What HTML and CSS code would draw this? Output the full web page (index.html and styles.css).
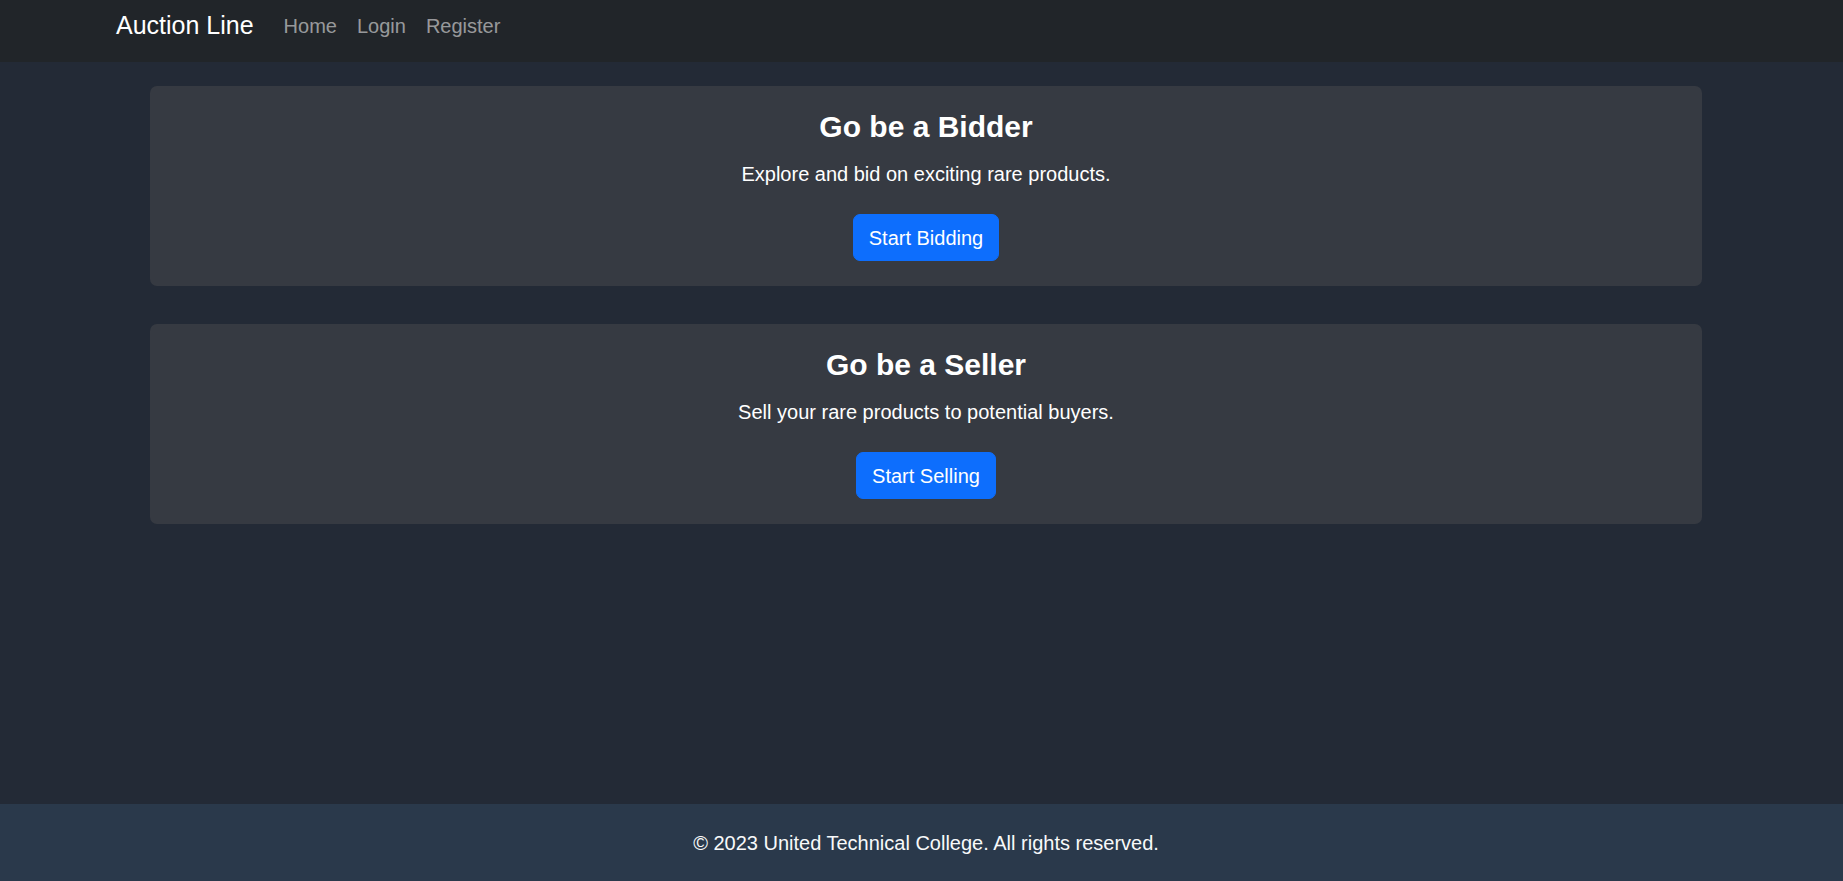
FILE: index.html
```html
<!DOCTYPE html>
<html lang="en">
<head>
<meta charset="utf-8">
<title>Auction Line</title>
<link rel="stylesheet" href="styles.css">
</head>
<body>
<div class="page">
  <nav class="navbar">
    <a class="brand" href="#">Auction Line</a>
    <ul class="nav-links">
      <li><a class="nav-link" href="#">Home</a></li>
      <li><a class="nav-link" href="#">Login</a></li>
      <li><a class="nav-link" href="#">Register</a></li>
    </ul>
  </nav>
  <main class="main">
    <section class="card">
      <h2 class="card-title">Go be a Bidder</h2>
      <p class="card-text">Explore and bid on exciting rare products.</p>
      <a class="btn" href="#">Start Bidding</a>
    </section>
    <section class="card">
      <h2 class="card-title">Go be a Seller</h2>
      <p class="card-text">Sell your rare products to potential buyers.</p>
      <a class="btn" href="#">Start Selling</a>
    </section>
  </main>
  <footer class="footer">
    <p class="footer-text">© 2023 United Technical College. All rights reserved.</p>
  </footer>
</div>
</body>
</html>
```

FILE: styles.css
```css
* { box-sizing: border-box; }
html, body { margin: 0; padding: 0; height: 100%; }
body {
  font-family: "Liberation Sans", Arial, sans-serif;
  font-size: 20px;
  line-height: 1.5;
  color: #fff;
  background: #232a36;
}
.page {
  min-height: 100%;
  display: flex;
  flex-direction: column;
}
.navbar {
  height: 62px;
  background: #212529;
  display: flex;
  align-items: flex-start;
  padding: 0 0 0 116px;
}
.brand {
  font-size: 25px;
  line-height: 37.5px;
  padding: 7px 0 6px;
  margin-right: 20px;
  color: #fff;
  text-decoration: none;
}
.nav-links {
  list-style: none;
  margin: 0;
  padding: 0;
  display: flex;
}
.nav-link {
  display: block;
  padding: 11px 10px 10px;
  line-height: 30px;
  color: rgba(255, 255, 255, 0.55);
  text-decoration: none;
}
.main {
  flex: 1;
  padding: 24px 141px 0 150px;
  display: flex;
  flex-direction: column;
  gap: 38px;
}
.card {
  height: 200px;
  background: #363a42;
  border-radius: 7px;
  padding: 23px 20px 24px;
  text-align: center;
  display: flex;
  flex-direction: column;
  align-items: center;
}
.card-title {
  margin: 0 0 14px;
  font-size: 30px;
  line-height: 36px;
  font-weight: 700;
}
.card-text {
  margin: 0 0 25px;
  font-size: 20px;
  line-height: 30px;
}
.btn {
  display: inline-block;
  height: 47px;
  padding: 7.5px 15px;
  border: 1px solid #0d6efd;
  border-radius: 7px;
  background: #0d6efd;
  color: #fff;
  font-size: 20px;
  line-height: 30px;
  text-decoration: none;
}
.footer {
  background: #2a394b;
  height: 77px;
  padding: 24px 0 23px 9px;
  text-align: center;
}
.footer-text {
  margin: 0;
  line-height: 30px;
  color: #f8f9fa;
}
```
